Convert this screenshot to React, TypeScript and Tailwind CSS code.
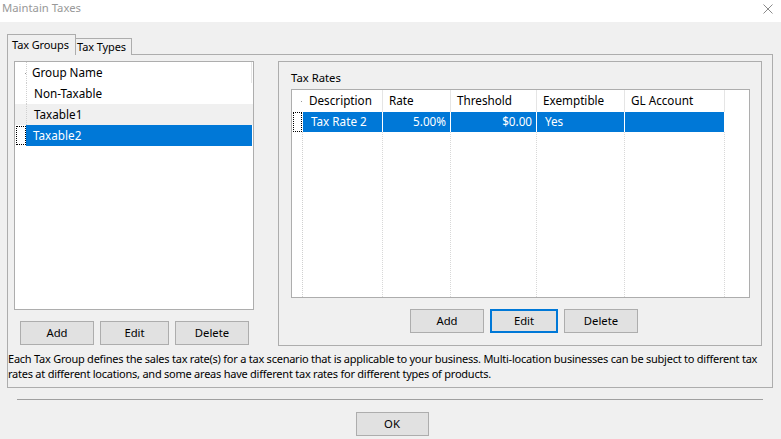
import React from "react";

const font = { fontFamily: '"Noto Sans", "Open Sans", sans-serif' };

function Btn({ label, w, focused }: { label: string; w: string; focused?: boolean }) {
  return (
    <div
      className={`${w} h-[24px] flex items-center justify-center text-[11.3px] text-black bg-[#e1e1e1] whitespace-nowrap ${
        focused ? "border-2 border-[#0078d7]" : "border border-[#adadad]"
      }`}
    >
      {label}
    </div>
  );
}

function GroupList() {
  const rows = ["Non-Taxable", "Taxable1", "Taxable2"];
  return (
    <div className="w-[240px] h-[249px] border border-[#adadad] bg-white flex flex-col">
      <div className="flex h-[21px]">
        <div className="w-[11px] h-full relative">
          <div className="absolute left-[10px] top-[11px] w-[1px] h-[1px] bg-[#999]" />
        </div>
        <div className="flex-1 h-full border-l border-dotted border-[#d0d0d0] flex items-center pl-[5px] text-[11.7px] text-black">
          <div className="flex-1">Group Name</div>
          <div className="w-[1px] h-full bg-[#e5e5e5] mr-[1px]" />
        </div>
      </div>
      {rows.map((r, i) => {
        const sel = i === 2;
        const alt = i === 1;
        return (
          <div key={r} className={`flex h-[21px] ${alt ? "bg-[#f0f0f0]" : ""}`}>
            <div className="w-[11px] h-full flex items-stretch pl-[1px] py-[1px]">
              {sel && <div className="w-[10px] border border-dotted border-black" />}
            </div>
            <div
              className={`flex-1 h-full flex items-center pl-[7px] text-[11.7px] ${
                sel ? "bg-[#0078d7] text-white" : "text-black border-l border-dotted border-[#d0d0d0]"
              } mr-[1px]`}
            >
              {r}
            </div>
          </div>
        );
      })}
    </div>
  );
}

type Col = { name: string; w: string; val: string; right?: boolean };

function RatesGrid() {
  const cols: Col[] = [
    { name: "Description", w: "w-[80px]", val: "Tax Rate 2" },
    { name: "Rate", w: "w-[68px]", val: "5.00%", right: true },
    { name: "Threshold", w: "w-[86px]", val: "$0.00", right: true },
    { name: "Exemptible", w: "w-[88px]", val: "Yes" },
    { name: "GL Account", w: "w-[100px]", val: "" },
  ];
  return (
    <div className="w-[459px] h-[209px] border border-[#adadad] bg-white flex">
      <div className="w-[11px] flex flex-col">
        <div className="h-[22px] relative">
          <div className="absolute left-[9px] top-[11px] w-[1px] h-[1px] bg-[#999]" />
        </div>
        <div className="h-[20px] flex pl-[1px] pr-[1px]">
          <div className="flex-1 border border-dotted border-black" />
        </div>
        <div className="flex-1 border-r border-dotted border-[#d0d0d0]" />
      </div>
      {cols.map((c) => (
        <div key={c.name} className={`${c.w} flex flex-col`}>
          <div className="h-[22px] flex items-center pl-[6px] text-[11.7px] text-black border-r border-[#e5e5e5] whitespace-nowrap">
            {c.name}
          </div>
          <div
            className={`h-[20px] flex items-center bg-[#0078d7] text-white text-[11.7px] border-r border-white whitespace-nowrap ${
              c.right ? "justify-end pr-[4px]" : "pl-[8px]"
            }`}
          >
            {c.val}
          </div>
          <div className="flex-1 border-r border-dotted border-[#d8d8d8]" />
        </div>
      ))}
      <div className="flex-1" />
    </div>
  );
}

export default function App() {
  return (
    <div className="w-[781px] h-[439px] bg-[#f0f0f0] overflow-hidden flex flex-col" style={font}>
      <div className="h-[22px] bg-white flex items-start justify-between shrink-0">
        <div className="pl-[2px] text-[11.3px] leading-[16px] text-[#999]">Maintain Taxes</div>
        <svg width="10" height="10" viewBox="0 0 10 10" className="mt-[4px] mr-[8px]">
          <path d="M0.5 0.5 L9.5 9.5 M9.5 0.5 L0.5 9.5" stroke="#8a8a8a" strokeWidth="1" />
        </svg>
      </div>

      <div className="pl-[7px] flex flex-col">
        <div className="flex items-end mt-[12px] h-[21px] relative z-10 -mb-[1px]">
          <div className="w-[69px] h-[21px] border border-b-0 border-[#adadad] bg-[#f0f0f0] flex items-center pl-[4px] text-[11px] tracking-[-0.1px] text-black whitespace-nowrap">
            Tax Groups
          </div>
          <div className="w-[56px] h-[17px] border border-l-0 border-b-0 border-[#adadad] bg-[#f0f0f0] flex items-center pl-[1px] text-[11px] tracking-[-0.1px] text-black whitespace-nowrap">
            Tax Types
          </div>
        </div>
        <div className="w-[766px] h-[334px] border border-[#adadad] flex flex-col">
          <div className="flex pt-[6px] pl-[6px]">
            <div className="flex flex-col">
              <GroupList />
              <div className="flex gap-[6px] pl-[6px] mt-[11px]">
                <Btn label="Add" w="w-[74px]" />
                <Btn label="Edit" w="w-[69px]" />
                <Btn label="Delete" w="w-[74px]" />
              </div>
            </div>
            <div className="ml-[24px] w-[484px] h-[285px] border border-[#adadad] flex flex-col pl-[12px] pt-[8px]">
              <div className="text-[11.3px] leading-[16px] text-black">Tax Rates</div>
              <div className="mt-[3px]">
                <RatesGrid />
              </div>
              <div className="flex gap-[6px] pl-[119px] mt-[11px]">
                <Btn label="Add" w="w-[74px]" />
                <Btn label="Edit" w="w-[68px]" focused />
                <Btn label="Delete" w="w-[74px]" />
              </div>
            </div>
          </div>
          <div className="pt-[5px] text-[11px] tracking-[-0.24px] leading-[15px] text-black whitespace-nowrap">
            Each Tax Group defines the sales tax rate(s) for a tax scenario that is applicable to your business.
            Multi-location businesses can be subject to different tax
            <br />
            rates at different locations, and some areas have different tax rates for different types of products.
          </div>
        </div>
      </div>

      <div className="ml-[17px] mt-[11px] w-[746px] h-[1px] bg-[#a0a0a0]" />
      <div className="flex justify-center mt-[12px] pl-[3px]">
        <Btn label="OK" w="w-[73px]" />
      </div>
    </div>
  );
}
